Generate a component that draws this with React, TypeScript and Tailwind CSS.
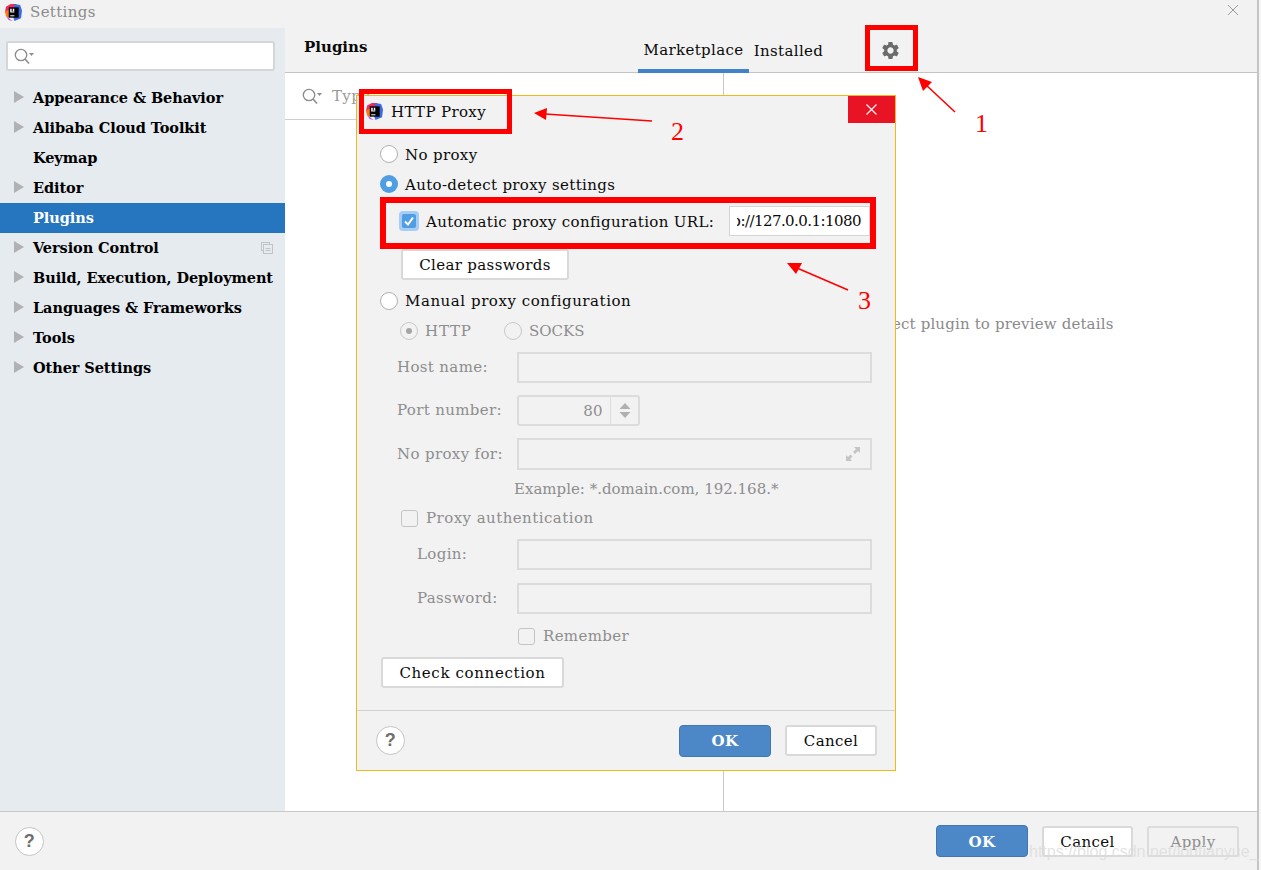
import React from "react";
import { MdSettings } from "react-icons/md";

const Logo = ({ size = 17 }: { size?: number }) => (
  <svg width={size} height={size} viewBox="0 0 18 18" className="shrink-0">
    <path d="M1 3 L6 0 L12 0 L10 8 L0 9 Z" fill="#f0295f" />
    <path d="M0 8 L4 6 L5 15 L1 13 Z" fill="#f97a12" />
    <path d="M10 0 L16 1 L18 7 L17 15 L10 18 L8 12 Z" fill="#3d6bdc" />
    <path d="M1 13 L8 18 L4 17 Z" fill="#b345f1" />
    <rect x="4" y="3.5" width="10.5" height="11" fill="#000" />
    <rect x="5.5" y="5" width="1.6" height="4" fill="#fff" />
    <rect x="8.2" y="5" width="1.6" height="3" fill="#fff" />
    <rect x="7" y="8" width="2.8" height="1" fill="#fff" />
    <rect x="5.5" y="12" width="4.5" height="1" fill="#fff" />
  </svg>
);

const SearchIcon = () => (
  <svg width="21" height="17" viewBox="0 0 21 17" className="shrink-0">
    <circle cx="7" cy="7" r="5.7" fill="none" stroke="#8c8c8c" strokeWidth="1.3" />
    <line x1="11" y1="11" x2="15" y2="15.5" stroke="#8c8c8c" strokeWidth="1.6" />
    <path d="M15 5 H20 L17.5 8 Z" fill="#8c8c8c" />
  </svg>
);

const Arrowless = () => (
  <svg width="10" height="12" viewBox="0 0 10 12" className="shrink-0">
    <path d="M0 0 L10 6 L0 12 Z" fill="#afb1b3" />
  </svg>
);

const Help = ({ className = "" }: { className?: string }) => (
  <div className={`w-[29px] h-[29px] rounded-full bg-white border border-[#c4c4c4] flex items-center justify-center text-[18px] font-bold text-[#6e6e6e] font-['Liberation_Sans',sans-serif] ${className}`}>
    ?
  </div>
);

const Radio = ({ state = "off", disabled = false }: { state?: "off" | "on"; disabled?: boolean }) =>
  state === "on" && !disabled ? (
    <span className="w-[18px] h-[18px] rounded-full bg-[#4f9ee3] flex items-center justify-center shrink-0">
      <span className="w-[6px] h-[6px] rounded-full bg-white" />
    </span>
  ) : (
    <span className={`w-[18px] h-[18px] rounded-full border flex items-center justify-center shrink-0 ${disabled ? "border-[#c9c9c9] bg-[#f2f2f2]" : "border-[#b0b0b0] bg-white"}`}>
      {state === "on" && <span className="w-[6px] h-[6px] rounded-full bg-[#a5a5a5]" />}
    </span>
  );

const Btn = ({ children, className = "" }: { children: React.ReactNode; className?: string }) => (
  <div className={`h-[31px] pt-[2px] bg-white border-2 border-[#d9d9d9] rounded-[3px] flex items-center justify-center text-[#0a0a0a] ${className}`}>
    {children}
  </div>
);

const Primary = ({ className = "" }: { className?: string }) => (
  <div className={`w-[92px] h-[32px] pt-[2px] bg-[#4c88c8] border border-[#3f76b4] rounded-[4px] flex items-center justify-center text-white font-bold ${className}`}>
    OK
  </div>
);

const DisabledField = ({ className = "", children }: { className?: string; children?: React.ReactNode }) => (
  <div className={`border-2 border-[#dcdcdc] bg-[#f2f2f2] ${className}`}>{children}</div>
);

const Row = ({ label, labelW, className = "", children }: { label: string; labelW: string; className?: string; children: React.ReactNode }) => (
  <div className={`flex items-center text-[#8d8d8d] ${className}`}>
    <span className={labelW}>{label}</span>
    {children}
  </div>
);

const items: { t: string; arrow: boolean; active?: boolean; copy?: boolean }[] = [
  { t: "Appearance & Behavior", arrow: true },
  { t: "Alibaba Cloud Toolkit", arrow: true },
  { t: "Keymap", arrow: false },
  { t: "Editor", arrow: true },
  { t: "Plugins", arrow: false, active: true },
  { t: "Version Control", arrow: true, copy: true },
  { t: "Build, Execution, Deployment", arrow: true },
  { t: "Languages & Frameworks", arrow: true },
  { t: "Tools", arrow: true },
  { t: "Other Settings", arrow: true },
];

export default function App() {
  return (
    <div className="relative w-[1261px] h-[870px] overflow-hidden flex bg-[#f2f2f2] text-[15px] tracking-[0.35px] text-[#0a0a0a] font-['DejaVu_Serif',serif]">
      <div className="w-[1257px] h-full flex flex-col">
        {/* title bar */}
        <div className="h-[28px] flex items-center justify-between shrink-0 pl-[5px] pr-[18px]">
          <div className="flex items-center gap-[8px] -mt-[4px]">
            <Logo />
            <span className="text-[#8b8b8b]">Settings</span>
          </div>
          <svg width="12" height="12" viewBox="0 0 12 12" className="-mt-[9px]">
            <path d="M1 1 L11 11 M11 1 L1 11" stroke="#9a9a9a" strokeWidth="1" />
          </svg>
        </div>

        <div className="flex-1 flex min-h-0">
          {/* sidebar */}
          <aside className="w-[285px] bg-[#e6ebf0] shrink-0 flex flex-col">
            <div className="mx-[6px] mt-[13px] w-[269px] h-[30px] bg-white border-2 border-[#d4d6d8] rounded-[3px] flex items-center pl-[6px]">
              <SearchIcon />
            </div>
            <div className="mt-[12px] flex flex-col font-bold text-[14.5px] tracking-[-0.08px]">
              {items.map((it) => (
                <div key={it.t} className={`h-[30px] flex items-center pl-[14px] relative ${it.active ? "bg-[#2675bf] text-white" : "text-black"}`}>
                  <span className="w-[19px] shrink-0 -mt-[3px]">{it.arrow && <Arrowless />}</span>
                  <span className="whitespace-nowrap">{it.t}</span>
                  {it.copy && (
                    <svg width="12" height="12" viewBox="0 0 12 12" className="absolute left-[261px] top-[9px]">
                      <rect x="0.5" y="0.5" width="8" height="8" fill="none" stroke="#bfc4c9" />
                      <rect x="2.5" y="2.5" width="9" height="9" fill="#e6ebf0" stroke="#bfc4c9" />
                      <path d="M4.5 6.5 H9.5 M4.5 8.5 H9.5" stroke="#bfc4c9" />
                    </svg>
                  )}
                </div>
              ))}
            </div>
          </aside>

          {/* main */}
          <main className="flex-1 flex flex-col min-w-0">
            <header className="h-[45px] shrink-0 border-b border-[#c4c4c4] flex items-center relative">
              <span className="ml-[19px] w-[334px] shrink-0 font-bold tracking-normal -mt-[6px]">Plugins</span>
              <div className="self-end flex h-[44px]">
                <div className="w-[111px] border-b-[4px] border-[#4083c9] flex items-center justify-center pt-[4px] -mb-[1px] whitespace-nowrap">Marketplace</div>
                <div className="w-[85px] flex items-center justify-center pt-[2px] pr-[6px]">Installed</div>
              </div>
              <MdSettings size={21} color="#6b6b6b" className="ml-[46px] mt-[1px]" />
            </header>
            <div className="flex-1 flex min-h-0 bg-white">
              <div className="w-[438px] shrink-0">
                <div className="h-[47px] border-b border-[#cfcfcf] flex items-center pl-[17px] gap-[9px]">
                  <SearchIcon />
                  <span className="text-[#9a9a9a]">Type</span>
                </div>
              </div>
              <div className="flex-1 border-l border-[#c8c8c8] flex justify-center pt-[240px] text-[#8a8a8a] tracking-[0.16px]">
                <span className="whitespace-nowrap h-[20px]">Select plugin to preview details</span>
              </div>
            </div>
          </main>
        </div>

        {/* footer */}
        <footer className="h-[59px] shrink-0 border-t border-[#c8c8c8] flex items-center pl-[15px] pr-[18px]">
          <Help />
          <div className="ml-auto flex gap-[14px] items-center">
            <Primary />
            <Btn className="w-[91px]">Cancel</Btn>
            <div className="w-[92px] h-[31px] pt-[2px] border-2 border-[#dcdcdc] rounded-[3px] flex items-center justify-center text-[#8d8d8d]">Apply</div>
          </div>
        </footer>
      </div>

      {/* right screenshot edge */}
      <div className="w-[4px] h-full border-l-2 border-[#c4c4c4] bg-[#f6f6f6]" />

      {/* HTTP Proxy dialog */}
      <div className="absolute left-[356px] top-[95px] w-[540px] h-[676px] bg-[#f2f2f2] border border-[#f5b916] flex flex-col">
        <div className="h-[27px] pt-[3px] shrink-0 flex items-center pl-[9px] relative">
          <Logo size={17} />
          <span className="ml-[8px] pt-[2px]">HTTP Proxy</span>
          <div className="absolute right-0 top-0 w-[47px] h-[27px] bg-[#e81426] flex items-center justify-center">
            <svg width="11" height="11" viewBox="0 0 11 11">
              <path d="M0.5 0.5 L10.5 10.5 M10.5 0.5 L0.5 10.5" stroke="#fff" strokeWidth="1.1" />
            </svg>
          </div>
        </div>
        <div className="flex flex-col flex-1 min-h-0">
          <div className="mt-[16px] h-[30px] flex items-center pl-[23px] gap-[7px]"><Radio /><span className="pt-[2px]">No proxy</span></div>
          <div className="h-[30px] flex items-center pl-[23px] gap-[7px]"><Radio state="on" /><span className="pt-[2px]">Auto-detect proxy settings</span></div>
          <div className="mt-[7px] h-[30px] flex items-center pl-[42px]">
            <span className="w-[20px] h-[20px] rounded-[4px] bg-[#a6cdf5] flex items-center justify-center shrink-0">
              <span className="w-[14px] h-[14px] rounded-[2px] bg-[#4f9ee3] flex items-center justify-center">
                <svg width="12" height="12" viewBox="0 0 12 12"><path d="M2 6.5 L5 9.5 L10 2.5" fill="none" stroke="#fff" strokeWidth="2" /></svg>
              </span>
            </span>
            <span className="ml-[7px] pt-[2px] whitespace-nowrap">Automatic proxy configuration URL:</span>
            <div className="ml-auto mr-[25px] w-[141px] h-[30px] bg-white border border-[#d4d4d4] flex items-center pl-[7px] pr-[8px] overflow-hidden whitespace-nowrap">
              <div className="w-full overflow-hidden flex justify-end tracking-[-0.55px]"><span className="shrink-0">http://127.0.0.1:1080</span></div>
            </div>
          </div>
          <Btn className="mt-[13px] ml-[44px] w-[168px]">Clear passwords</Btn>
          <div className="mt-[6px] h-[30px] flex items-center pl-[23px] gap-[7px] tracking-[0.55px]"><Radio />Manual proxy configuration</div>
          <div className="h-[30px] flex items-center pl-[43px] text-[#8d8d8d]">
            <Radio state="on" disabled />
            <span className="ml-[7px] w-[79px] tracking-[0.8px]">HTTP</span>
            <Radio disabled />
            <span className="ml-[7px] tracking-normal">SOCKS</span>
          </div>
          <Row label="Host name:" labelW="w-[120px]" className="mt-[6px] pl-[40px]"><DisabledField className="w-[355px] h-[31px]" /></Row>
          <Row label="Port number:" labelW="w-[120px]" className="mt-[12px] pl-[40px]">
            <div className="w-[123px] h-[31px] border-2 border-[#dcdcdc] rounded-[3px] flex items-center">
              <span className="flex-1 text-right pr-[7px] pt-[1px]">80</span>
              <div className="w-[28px] h-full border-l border-[#dcdcdc] flex items-center justify-center">
                <svg width="12" height="17" viewBox="0 0 12 17"><path d="M6 1 L11.5 7 H0.5 Z M6 16 L11.5 10 H0.5 Z" fill="#b0b0b0" /></svg>
              </div>
            </div>
          </Row>
          <Row label="No proxy for:" labelW="w-[120px]" className="mt-[12px] pl-[40px]">
            <DisabledField className="w-[355px] h-[32px] flex items-center justify-end pr-[9px]">
              <svg width="16" height="16" viewBox="0 0 16 16">
                <path d="M9 1 H15 V7 L13 5 L10 8 L8 6 L11 3 Z M1 15 V9 L3 11 L5.5 8.5 L7.5 10.5 L5 13 L7 15 Z" fill="#c4c4c4" />
              </svg>
            </DisabledField>
          </Row>
          <div className="mt-[9px] h-[20px] pl-[157px] flex items-center text-[#8d8d8d] whitespace-nowrap tracking-normal">Example: *.domain.com, 192.168.*</div>
          <div className="mt-[9px] h-[20px] pl-[44px] flex items-center text-[#8d8d8d] tracking-[0.45px]">
            <span className="w-[17px] h-[17px] border border-[#c4c4c4] rounded-[3px] shrink-0" />
            <span className="ml-[8px]">Proxy authentication</span>
          </div>
          <Row label="Login:" labelW="w-[100px]" className="mt-[11px] pl-[60px]"><DisabledField className="w-[355px] h-[31px]" /></Row>
          <Row label="Password:" labelW="w-[100px]" className="mt-[13px] pl-[60px]"><DisabledField className="w-[355px] h-[31px]" /></Row>
          <div className="mt-[12px] h-[20px] pl-[161px] flex items-center text-[#8d8d8d]">
            <span className="w-[17px] h-[17px] border border-[#c4c4c4] rounded-[3px] shrink-0" />
            <span className="ml-[8px]">Remember</span>
          </div>
          <Btn className="mt-[11px] ml-[24px] w-[183px] tracking-[0.65px]">Check connection</Btn>
          <div className="mt-auto h-[60px] border-t border-[#d2d2d2] flex items-center pl-[19px] pr-[18px]">
            <Help />
            <div className="ml-auto flex items-center gap-[14px]">
              <Primary />
              <Btn className="w-[92px]">Cancel</Btn>
            </div>
          </div>
        </div>
      </div>

      {/* annotation boxes */}
      <div className="absolute left-[865px] top-[25px] w-[53px] h-[46px] border-[5px] border-[#ff0000]" />
      <div className="absolute left-[359px] top-[89px] w-[153px] h-[45px] border-[5px] border-[#ff0000]" />
      <div className="absolute left-[380px] top-[197px] w-[496px] h-[52px] border-[6px] border-[#ff0000]" />

      {/* arrows */}
      <svg className="absolute left-0 top-0 pointer-events-none" width="1261" height="870" viewBox="0 0 1261 870">
        <g stroke="#ff0000" strokeWidth="1.6" fill="#ff0000">
          <line x1="955" y1="112" x2="925" y2="84" />
          <path d="M918 77 L932 82 L923 91 Z" stroke="none" />
          <line x1="652" y1="121" x2="545" y2="114" />
          <path d="M534 113 L547 108 L546 120 Z" stroke="none" />
          <line x1="848" y1="290" x2="797" y2="268" />
          <path d="M787 263 L802 263 L796 274 Z" stroke="none" />
        </g>
      </svg>
      <span className="absolute left-[975px] top-[109px] text-[26px] leading-[30px] tracking-normal text-[#ff0000] font-['Liberation_Serif',serif]">1</span>
      <span className="absolute left-[671px] top-[117px] text-[26px] leading-[30px] tracking-normal text-[#ff0000] font-['Liberation_Serif',serif]">2</span>
      <span className="absolute left-[858px] top-[286px] text-[26px] leading-[30px] tracking-normal text-[#ff0000] font-['Liberation_Serif',serif]">3</span>

      {/* watermark */}
      <span className="absolute left-[1029px] top-[842px] text-[16px] leading-[20px] tracking-normal text-[#dcdcdc]/80 font-['Liberation_Sans',sans-serif] whitespace-nowrap">https://blog.csdn.net/loutianyue_</span>
    </div>
  );
}
